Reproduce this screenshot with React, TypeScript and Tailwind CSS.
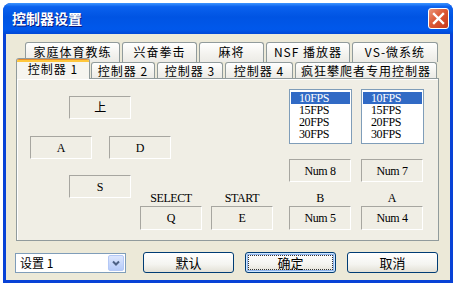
const cjk = "font-['Noto_Sans_CJK_SC',sans-serif]"
const serif = "font-['Liberation_Serif','Noto_Sans_CJK_SC',serif]"

const Box = ({ label, tall }: { label: string; tall?: boolean }) => (
  <div
    className={`flex w-[62px] ${tall ? 'h-[24px]' : 'h-[23px]'} items-center justify-center border-t border-l border-t-[#A7A6A0] border-l-[#A7A6A0] border-r border-b border-r-white border-b-white text-[12px] tracking-[-0.4px] text-black ${serif}`}
  >
    {label}
  </div>
)

const Label = ({ text }: { text: string }) => (
  <div className={`h-[12px] text-center text-[12px] leading-[12px] tracking-[-0.4px] text-black ${serif}`}>{text}</div>
)

const ListBox = () => (
  <div className="h-[55px] w-[63px] border border-[#7F9DB9] bg-white px-[1px] pt-[2px]">
    {['10FPS', '15FPS', '20FPS', '30FPS'].map((item, index) => (
      <div
        key={item}
        className={`h-[12px] pl-[8px] text-[12px] leading-[12px] tracking-[-0.4px] ${serif} ${
          index === 0 ? 'bg-[#316AC5] text-white' : 'text-black'
        }`}
      >
        {item}
      </div>
    ))}
  </div>
)

const BackTab = ({ label, width }: { label: string; width: number }) => (
  <div
    style={{ width }}
    className={`flex h-[20px] items-start justify-center rounded-t-[3px] border border-b-0 border-[#919B9C] bg-[linear-gradient(#FFFFFF,#F3F2EE_60%,#ECEBE6)] pt-[1px] text-[12px] leading-[15px] tracking-[1px] text-black ${cjk}`}
  >
    {label}
  </div>
)

const FrontTab = ({ label, width }: { label: string; width: number }) => (
  <div
    style={{ width }}
    className={`mt-[4px] flex h-[16px] items-start justify-center rounded-t-[3px] border border-b-0 border-[#919B9C] bg-[linear-gradient(#FFFFFF,#F3F2EE_60%,#ECEBE6)] text-[12px] leading-[15px] tracking-[1px] text-black ${cjk}`}
  >
    {label}
  </div>
)

const Button = ({ label, primary }: { label: string; primary?: boolean }) => (
  <div
    className={`flex h-[21px] w-[91px] items-center justify-center rounded-[3px] border border-[#003C74] bg-[linear-gradient(#FFFFFF,#F4F4F0_60%,#E3E1D6)] p-[2px] text-[13px] text-black ${cjk} ${
      primary ? 'shadow-[inset_0_0_0_1px_#CEE7FF,inset_0_0_0_2px_#90B4EC]' : ''
    }`}
  >
    <div
      className={`flex h-full w-full items-center justify-center ${
        primary ? 'border border-dotted border-[#333]' : ''
      }`}
    >
      {label}
    </div>
  </div>
)

export default function App() {
  return (
    <div className="h-[286px] w-[457px] bg-white p-[3px]">
      <div className="flex h-[280px] w-[450px] flex-col overflow-hidden rounded-t-[8px] bg-[#0842D6]">
        <div className="flex h-[31px] items-start justify-between bg-[linear-gradient(#3D95FF_0%,#0A61EE_12%,#0054E3_45%,#0058EB_85%,#0047D6_100%)] pl-[9px] pr-[4px]">
          <span className={`mt-[6px] text-[14px] font-bold leading-[18px] text-white [text-shadow:1px_1px_#0A1A7E] ${cjk}`}>
            控制器设置
          </span>
          <div className="mt-[5px] flex h-[21px] w-[21px] items-center justify-center rounded-[3px] border border-white bg-[linear-gradient(135deg,#EA9679,#DD5A37_45%,#C5381C)]">
            <svg width="13" height="13" viewBox="0 0 13 13">
              <path d="M2 2L11 11M11 2L2 11" stroke="white" strokeWidth="2.4" strokeLinecap="square" />
            </svg>
          </div>
        </div>
        <div className="mx-[3px] mb-[3px] flex-1 bg-[#ECE9D8] pl-[10px] pt-[8px]">
          <div className="w-[423px]">
            <div className="flex gap-[2px] pl-[9px]">
              <BackTab label="家庭体育教练" width={95} />
              <BackTab label="兴奋拳击" width={75} />
              <BackTab label="麻将" width={65} />
              <BackTab label="NSF 播放器" width={84} />
              <BackTab label="VS-微系统" width={86} />
            </div>
            <div className="relative z-20 -mt-[4px] flex h-[20px] items-start">
              <div className="relative z-20 flex h-[21px] w-[74px] flex-col overflow-hidden rounded-t-[3px] border border-b-0 border-[#919B9C] bg-[#F6F5F0]">
                <div className="h-[1px] bg-[#E68B2C]" />
                <div className="h-[2px] bg-[#FFC73C]" />
                <div className={`text-center text-[12px] leading-[14px] tracking-[1px] text-black ${cjk}`}>控制器 1</div>
              </div>
              <div className="ml-[1px] flex gap-[2px]">
                <FrontTab label="控制器 2" width={64} />
                <FrontTab label="控制器 3" width={66} />
                <FrontTab label="控制器 4" width={68} />
                <FrontTab label="疯狂攀爬者专用控制器" width={142} />
              </div>
            </div>
            <div className="relative z-0 h-[163px] w-[423px] border border-[#919B9C] bg-[#F0EEE5] shadow-[inset_1px_1px_0_#FFFFFF]">
              <div className="flex items-start pl-[13px] pt-[10px]">
                <div className="w-[141px] pt-[7px]">
                  <div className="ml-[39px]">
                    <Box label="上" />
                  </div>
                  <div className="mt-[17px] flex gap-[17px]">
                    <Box label="A" />
                    <Box label="D" />
                  </div>
                </div>
                <div className="ml-[118px] flex gap-[9px]">
                  <ListBox />
                  <ListBox />
                </div>
              </div>
              <div className="flex items-start pl-[13px]">
                <div className="w-[110px] pl-[39px] pt-[16px]">
                  <Box label="S" />
                </div>
                <div className="pt-[33px]">
                  <Label text="SELECT" />
                  <div className="mt-[2px]">
                    <Box label="Q" tall />
                  </div>
                </div>
                <div className="ml-[9px] pt-[33px]">
                  <Label text="START" />
                  <div className="mt-[2px]">
                    <Box label="E" tall />
                  </div>
                </div>
                <div className="ml-[16px]">
                  <Box label="Num 8" />
                  <div className="mt-[10px]">
                    <Label text="B" />
                  </div>
                  <div className="mt-[2px]">
                    <Box label="Num 5" tall />
                  </div>
                </div>
                <div className="ml-[10px]">
                  <Box label="Num 7" />
                  <div className="mt-[10px]">
                    <Label text="A" />
                  </div>
                  <div className="mt-[2px]">
                    <Box label="Num 4" tall />
                  </div>
                </div>
              </div>
            </div>
          </div>
          <div className="mt-[11px] flex items-start">
            <div className="-ml-[1px] mt-[1px] flex h-[20px] w-[111px] items-center border border-[#7F9DB9] bg-white p-[1px]">
              <span className={`flex-1 pl-[3px] text-[12px] leading-[14px] ${cjk}`}>设置 1</span>
              <div className="flex h-full w-[16px] items-center justify-center rounded-[2px] border border-[#B4C8F6] bg-[linear-gradient(#DCE6FD,#B6CBF9)]">
                <svg width="8" height="6" viewBox="0 0 8 6">
                  <path d="M1 1.5L4 4.5L7 1.5" fill="none" stroke="#4D6185" strokeWidth="2" />
                </svg>
              </div>
            </div>
            <div className="ml-[17px] flex gap-[11px]">
              <Button label="默认" />
              <Button label="确定" primary />
              <Button label="取消" />
            </div>
          </div>
        </div>
      </div>
    </div>
  )
}
